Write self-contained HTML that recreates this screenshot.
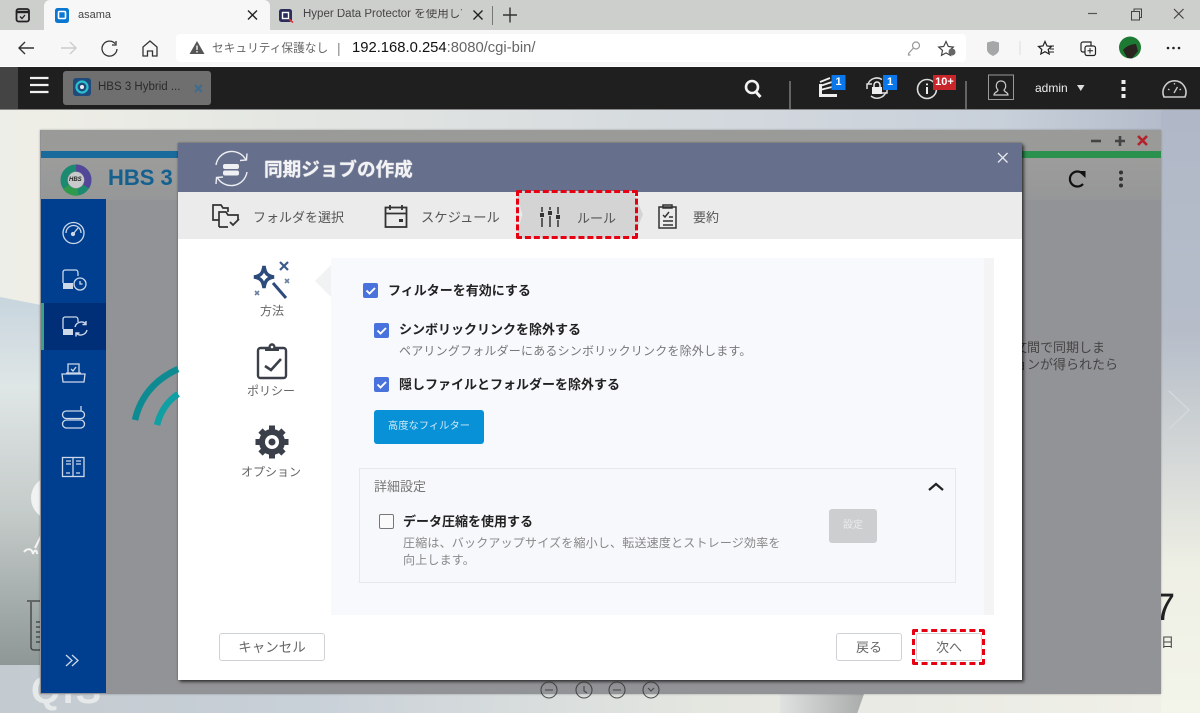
<!DOCTYPE html>
<html lang="ja"><head><meta charset="utf-8"><title>asama</title>
<style>
*{box-sizing:border-box;margin:0;padding:0}
html,body{width:1200px;height:713px;overflow:hidden;background:#eee}
body{position:relative;font-family:"Liberation Sans","Noto Sans CJK JP",sans-serif}
#w{position:absolute;left:0;top:0;width:1200px;height:713px;overflow:hidden;filter:blur(.3px)}
.a{position:absolute}
.t{position:absolute;white-space:nowrap;line-height:1}
svg{position:absolute;left:0;top:0}
.btn{position:absolute;background:#fff;border:1px solid #cfd2d4;border-radius:3px;color:#666;font-size:13px;text-align:center}
.cb{position:absolute;width:15px;height:15px;border-radius:2px;background:#4a72dc}
.b{font-weight:bold;color:#222;font-size:13px}
.g{color:#777;font-size:12px;letter-spacing:.2px}
.dash{position:absolute;border:3px dashed #e60012;border-radius:2px}
</style></head><body><div id="w">
<!-- desktop -->
<div class="a" style="left:0;top:110px;width:1200px;height:603px;background:linear-gradient(90deg,#eeeee8 0,#eeeee6 40px,#c8d0da 1000px,#b0b8c8 1200px)"></div>
<div class="a" style="left:0;top:297px;width:41px;height:368px;background:linear-gradient(180deg,#c8d5de 0,#dfe6e6 90px,#c3cac8 220px,#8e9796 368px);clip-path:polygon(0 0,100% 8px,100% 100%,0 100%)"></div>
<div class="a" style="left:1161px;top:110px;width:39px;height:603px;background:linear-gradient(180deg,#b0b8c8 0,#b6bdc9 220px,#d2d6d6 340px,#eff0e5 460px,#f3f4ea 100%)"></div>
<div class="a" style="left:0;top:665px;width:1161px;height:48px;background:linear-gradient(90deg,#c4cbd0 0,#c8d0d8 300px,#e4e6e0 700px,#f0f0e8 100%)"></div>
<div class="a" style="left:780px;top:694px;width:84px;height:19px;background:linear-gradient(90deg,#dfe2e0,#a9acaa);clip-path:polygon(0 0,100% 0,92% 100%,0 100%)"></div>
<div class="t" style="left:31px;top:672px;font-size:38px;font-weight:bold;color:#e6e9ea;letter-spacing:-4px">QTS</div>
<div class="a" style="left:31px;top:476px;width:44px;height:44px;border-radius:50%;background:#f1f3f2"></div>
<div class="t" style="left:1154px;top:589px;font-size:38px;color:#222">7</div>
<div class="t" style="left:1161px;top:636px;font-size:13px;color:#444">日</div>
<svg width="1200" height="713" viewBox="0 0 1200 713" fill="none">
<path d="M27 601h14M31 602v45q0 3 3 3h7M36 622h5M36 627h5M36 632h5M36 637h5M36 642h5" stroke="#3a3d3d" stroke-width="1.300"/>
<path d="M24 552c3-4 8-4 9 2 1-4 4-5 4 0M35 548l6-12" stroke="#f4f4f4" stroke-width="2"/>
</svg>

<!-- HBS window -->
<div class="a" style="left:40px;top:130px;width:1121px;height:564px;background:#929396;box-shadow:0 0 2px rgba(0,0,0,.3)"></div>
<div class="a" style="left:41px;top:130px;width:1120px;height:21px;background:#9a9a99"></div>
<div class="a" style="left:41px;top:151px;width:1120px;height:7px;background:#2a924e"></div>
<div class="a" style="left:41px;top:151px;width:140px;height:7px;background:#1b6a9c"></div>
<div class="a" style="left:41px;top:158px;width:1120px;height:42px;background:linear-gradient(180deg,#9c9c9b,#969798)"></div>
<div class="a" style="left:41px;top:199px;width:65px;height:494px;background:#003f90"></div>
<div class="a" style="left:41px;top:303px;width:65px;height:47px;background:#002f77"></div>
<div class="a" style="left:41px;top:303px;width:3px;height:47px;background:#3f9e86"></div>
<div class="t" style="left:108px;top:167px;font-size:22px;font-weight:bold;color:#14608f">HBS 3</div>
<div class="t" style="left:1014px;top:339px;font-size:13px;line-height:17px;color:#444">文間で同期しま<br>ョンが得られたら</div>

<!-- Browser chrome -->
<div class="a" style="left:0;top:0;width:1200px;height:30px;background:#cdcfcc"></div>
<div class="a" style="left:44px;top:0;width:226px;height:31px;background:#f7f7f7;border-radius:6px 6px 0 0"></div>
<div class="a" style="left:0;top:30px;width:1200px;height:36px;background:#f7f7f7"></div>
<div class="a" style="left:176px;top:34px;width:790px;height:28px;background:#fff;border-radius:4px"></div>
<div class="t" style="left:78px;top:10px;font-size:11px;color:#444">asama</div>
<div class="t" style="left:303px;top:9px;font-size:11.500px;color:#444;width:159px;overflow:hidden">Hyper Data Protector を使用して/</div>
<div class="t" style="left:212px;top:42.500px;font-size:11.700px;color:#666">セキュリティ保護なし</div>
<div class="t" style="left:337px;top:41px;font-size:14px;color:#888">|</div>
<div class="t" style="left:352px;top:41px;font-size:14.800px;color:#666"><span style="color:#111">192.168.0.254</span>:8080/cgi-bin/</div>

<!-- QTS bar -->
<div class="a" style="left:0;top:66px;width:1200px;height:1px;background:#fff"></div>
<div class="a" style="left:0;top:67px;width:1200px;height:42px;background:#1f1f1f"></div>
<div class="a" style="left:0;top:67px;width:18px;height:42px;background:#444"></div>
<div class="a" style="left:0;top:109px;width:1200px;height:1px;background:#888"></div>
<div class="a" style="left:63px;top:71px;width:148px;height:34px;background:#6f6f6f;border-radius:3px"></div>
<div class="t" style="left:98px;top:82px;font-size:11.500px;color:#2a2a2a">HBS 3 Hybrid ...</div>
<div class="t" style="left:1035px;top:82px;font-size:12px;color:#eee">admin</div>

<!-- Modal -->
<div class="a" style="left:178px;top:143px;width:844px;height:537px;background:#fff;box-shadow:2px 2px 3px rgba(0,0,0,.6),0 0 2px rgba(0,0,0,.4)"></div>
<div class="a" style="left:178px;top:143px;width:844px;height:49px;background:#666f8b"></div>
<div class="a" style="left:178px;top:192px;width:844px;height:47px;background:#ebebeb"></div>
<div class="a" style="left:516px;top:191px;width:127px;height:47px;background:#d4d4d4;clip-path:polygon(0 0,92% 0,100% 50%,92% 100%,0 100%,5% 50%)"></div>
<div class="t" style="left:264px;top:161px;font-size:18.600px;font-weight:bold;color:#f3f3f5;text-shadow:0 0 1px #fff">同期ジョブの作成</div>
<div class="t" style="left:253px;top:211px;font-size:13px;color:#555">フォルダを選択</div>
<div class="t" style="left:421px;top:211px;font-size:13.300px;color:#555">スケジュール</div>
<div class="t" style="left:577px;top:212px;font-size:13px;color:#555">ルール</div>
<div class="t" style="left:693px;top:211px;font-size:13px;color:#555">要約</div>
<div class="t" style="left:260px;top:305px;font-size:12px;color:#666">方法</div>
<div class="t" style="left:247px;top:385px;font-size:12px;color:#666">ポリシー</div>
<div class="t" style="left:241px;top:466px;font-size:12px;color:#666">オプション</div>

<div class="a" style="left:331px;top:258px;width:663px;height:357px;background:#f8f9fd"></div>
<div class="a" style="left:984px;top:258px;width:10px;height:357px;background:#f3f4f3"></div>
<div class="a" style="left:315px;top:265px;width:16px;height:32px;background:#f1f2f3;clip-path:polygon(100% 0,0 50%,100% 100%)"></div>

<div class="cb" style="left:363px;top:283px"></div>
<div class="t b" style="left:388px;top:284px">フィルターを有効にする</div>
<div class="cb" style="left:374px;top:323px"></div>
<div class="t b" style="left:399px;top:323px">シンボリックリンクを除外する</div>
<div class="t g" style="left:399px;top:345px">ペアリングフォルダーにあるシンボリックリンクを除外します。</div>
<div class="cb" style="left:374px;top:377px"></div>
<div class="t b" style="left:399px;top:378px">隠しファイルとフォルダーを除外する</div>
<div class="a" style="left:374px;top:410px;width:110px;height:34px;background:#0891d7;border-radius:3px;color:#cfeaf8;font-size:10.300px;line-height:34px;text-align:center">高度なフィルター</div>

<div class="a" style="left:359px;top:468px;width:597px;height:115px;background:#f7f8fb;border:1px solid #e6e8ea"></div>
<div class="t" style="left:374px;top:480px;font-size:13px;color:#777">詳細設定</div>
<div class="a" style="left:379px;top:514px;width:15px;height:15px;border:1px solid #777;border-radius:2px;background:#fafafa"></div>
<div class="t b" style="left:403px;top:515px">データ圧縮を使用する</div>
<div class="t g" style="left:403px;top:535px;line-height:17px;color:#888">圧縮は、バックアップサイズを縮小し、転送速度とストレージ効率を<br>向上します。</div>
<div class="a" style="left:829px;top:509px;width:48px;height:34px;background:#ccced0;border-radius:3px;color:#ebecec;font-size:10px;line-height:34px;text-align:center">設定</div>

<div class="btn" style="left:219px;top:633px;width:106px;height:28px;line-height:27px;font-size:13.500px">キャンセル</div>
<div class="btn" style="left:836px;top:633px;width:66px;height:28px;line-height:27px">戻る</div>
<div class="btn" style="left:916px;top:633px;width:66px;height:28px;line-height:27px">次へ</div>
<div class="dash" style="left:516px;top:190px;width:122px;height:49px"></div>
<div class="dash" style="left:912px;top:629px;width:73px;height:36px"></div>

<svg width="1200" height="713" viewBox="0 0 1200 713" fill="none">
<!-- tab strip icons -->
<g stroke="#222" stroke-width="1.800"><rect x="16.500" y="9" width="12.500" height="12.500" rx="2"/><path d="M16.500 12h12.500" stroke-width="2.500"/><path d="M20 16.500l2 2 3-3.500" stroke-width="1.300"/></g>
<rect x="55" y="8" width="14" height="15" rx="2.500" fill="#0a78d2"/><rect x="58.500" y="11.500" width="7" height="7" rx="1" stroke="#fff" stroke-width="1.600"/>
<path d="M248 10.500l9 9M257 10.500l-9 9" stroke="#222" stroke-width="1.400"/>
<rect x="279" y="9" width="13" height="13" rx="2.500" fill="#2d2d5c"/><rect x="282.500" y="12.500" width="6" height="6" stroke="#fff" stroke-width="1.400"/><path d="M289 19l4 3.500" stroke="#d33" stroke-width="1.500"/>
<path d="M473.500 10.500l9 9M482.500 10.500l-9 9" stroke="#222" stroke-width="1.400"/>
<path d="M492.500 6v19" stroke="#777"/><path d="M510 7.500v15M503 15h14" stroke="#333" stroke-width="1.400"/>
<path d="M1088 13.500h9" stroke="#555" stroke-width="1.200"/>
<path d="M1131.500 11.500h8v8.500h-8zM1134 11.500V9h7.500v8.500H1139.500" stroke="#444"/>
<path d="M1174 9l9.500 9.500M1183.500 9l-9.500 9.500" stroke="#444" stroke-width="1.200"/>
<!-- nav row -->
<path d="M34 48H19M25 42l-6 6 6 6" stroke="#333" stroke-width="1.400"/>
<path d="M76 48H61M70 42l6 6-6 6" stroke="#ccc" stroke-width="1.400"/>
<path d="M115 43.500a7.500 7.500 0 1 0 2 5.500M116 41v4h-4" stroke="#333" stroke-width="1.300"/>
<path d="M150 41l-7 6v9h4.500v-5h5v5h4.500v-9z" stroke="#333" stroke-width="1.300"/>
<path d="M197 41l7.500 13h-15z" fill="#555"/><path d="M197 45.500v4.500M197 51v1.500" stroke="#fff" stroke-width="1.300"/>
<circle cx="916" cy="45.500" r="3.500" stroke="#999" stroke-width="1.200"/><path d="M913.500 48l-5 5.500v1.500h2" stroke="#999" stroke-width="1.200"/>
<path d="M946 41.500l2.300 5 5 .6-3.800 3.300 1 5-4.500-2.500-4.500 2.500 1-5-3.800-3.300 5-.6z" stroke="#444" stroke-width="1.200"/><circle cx="952" cy="52" r="3.500" fill="#666"/>
<path d="M993 41l6 1.500v7c0 3-3 5-6 6.500-3-1.500-6-3.500-6-6.500v-7z" fill="#a5a7a8"/>
<path d="M1020 41v14" stroke="#ddd"/>
<path d="M1045 41.500l2 4.500 4.500.5-3.300 3 1 4.500-4.200-2.300-4.200 2.300 1-4.500-3.300-3 4.500-.5z" stroke="#222" stroke-width="1.200"/><path d="M1050 46h4M1050 49h4M1049 52h5" stroke="#222"/>
<path d="M1083 42h8v10h-8a2 2 0 0 1-2-2v-6a2 2 0 0 1 2-2z" stroke="#222" stroke-width="1.200"/><rect x="1085" y="46" width="10.500" height="9.500" rx="2" fill="#f7f7f7" stroke="#222" stroke-width="1.200"/><path d="M1090 48v5.500M1087.500 50.700h5.500" stroke="#222"/>
<circle cx="1130" cy="47.500" r="11" fill="#1d7a32"/><path d="M1123 50c3-4 9-6 13-6l2 7-6 7.500-5-1z" fill="#2a2420"/>
<circle cx="1168" cy="48" r="1.300" fill="#222"/><circle cx="1173.500" cy="48" r="1.300" fill="#222"/><circle cx="1179" cy="48" r="1.300" fill="#222"/>
<!-- QTS bar -->
<path d="M30 78h18.500M30 85h18.500M30 92h18.500" stroke="#f2f2f2" stroke-width="2.200"/>
<rect x="73" y="78" width="18" height="18" rx="3" fill="#1f4a7c"/><circle cx="82" cy="87" r="5.500" stroke="#2bc0d0" stroke-width="2.200"/><circle cx="82" cy="87" r="2" fill="#eee"/>
<path d="M195 85l7 7M202 85l-7 7" stroke="#3f6d8e" stroke-width="2.200"/>
<circle cx="752" cy="87" r="6" stroke="#f2f2f2" stroke-width="2.600"/><path d="M756 92l4.500 5" stroke="#f2f2f2" stroke-width="3"/>
<path d="M790 81v28M966 81v28" stroke="#aaa"/>
<path d="M819 95.500h18" stroke="#eee" stroke-width="3"/><path d="M820 90l12-3M820 86l12-4M820 82l10-4" stroke="#eee" stroke-width="1.800"/><rect x="819" y="84" width="3" height="13" fill="#eee"/>
<rect x="831.500" y="75" width="14" height="15" fill="#0a78ea"/>
<path d="M868 84a9.500 9.500 0 0 1 14-4.500M886 92a9.500 9.500 0 0 1-15 4M867 89v-5h5M887 88v5h-5" stroke="#ddd" stroke-width="1.500"/><rect x="872" y="87" width="10" height="7" fill="#eee"/><path d="M874 87v-2a3 3 0 0 1 6 0v2" stroke="#eee" stroke-width="1.500"/>
<rect x="883" y="75" width="14" height="15" fill="#0a78ea"/>
<circle cx="927" cy="89" r="9.500" stroke="#ddd" stroke-width="1.600"/><path d="M927 87v7M927 83.500v1.800" stroke="#eee" stroke-width="2"/>
<rect x="933" y="75" width="23" height="15" fill="#c9262c"/>
<rect x="988.500" y="75" width="25" height="24.500" stroke="#999"/><path d="M994 95c0-3 4-3 4-5-3-3-2-9 3-9s6 6 3 9c0 2 4 2 4 5z" stroke="#ccc" stroke-width="1.200"/>
<path d="M1077 85h7.500l-3.700 6z" fill="#ddd"/>
<rect x="1121.500" y="80" width="4" height="4" fill="#eee"/><rect x="1121.500" y="87" width="4" height="4" fill="#eee"/><rect x="1121.500" y="94" width="4" height="4" fill="#eee"/>
<path d="M1164 97a11.500 11.500 0 1 1 21 0z" stroke="#ccc" stroke-width="1.600"/><path d="M1174 93l3.500-6M1168 89l1.500 1M1181 89l-1.500 1M1174.500 83v1.500" stroke="#ccc" stroke-width="1.300"/>
<!-- HBS window chrome -->
<path d="M1091 141h10" stroke="#444" stroke-width="2.600"/><path d="M1115 141h10M1120 136v10" stroke="#444" stroke-width="2.600"/><path d="M1138 136l9 9M1147 136l-9 9" stroke="#b5222a" stroke-width="2.600"/>
<path d="M1083 174a7.500 7.500 0 1 0 0 10" stroke="#111" stroke-width="2.200"/><path d="M1078 171h7.500v7z" fill="#111"/>
<circle cx="1121" cy="172.500" r="2" fill="#333"/><circle cx="1121" cy="179" r="2" fill="#333"/><circle cx="1121" cy="185.500" r="2" fill="#333"/>
<!-- HBS logo -->
<circle cx="76" cy="180" r="12" stroke="#1b8a70" stroke-width="7"/><path d="M76 168a12 12 0 0 1 10 18.500" stroke="#54479a" stroke-width="7"/><path d="M66 187a12 12 0 0 0 12 5" stroke="#2f9a4c" stroke-width="7"/><circle cx="76" cy="180" r="8" fill="#c8cacc"/>
<!-- sidebar icons -->
<g stroke="#cdd8e8" stroke-width="1.300">
<circle cx="73.500" cy="233" r="10.500"/><path d="M66 233a7.500 7.500 0 0 1 15 0M73 234l5-6"/><circle cx="73" cy="234" r="1.500" fill="#cdd8e8"/>
<path d="M63 283v-11c0-1 1-2 2-2h11c1 0 2 1 2 3v3"/><rect x="63" y="283" width="10" height="6" fill="#cdd8e8" stroke="none"/><circle cx="80" cy="284" r="6" fill="#003f90"/><path d="M80 281v3h2.500"/>
<path d="M63 329v-10c0-1 1-2 2-2h11c1 0 2 1 2 3v2"/><rect x="63" y="329" width="10" height="6" fill="#cdd8e8" stroke="none"/><path d="M75 327a6.500 6.500 0 0 1 11-3M87 330a6.500 6.500 0 0 1-11 3M86 321v3.500h-3.500M76 336.500V333h3.500" stroke-width="1.400"/>
<path d="M68 373v-9h11v9M71 369l2 2 3-4M62 374h23l-1 8h-21zM66 373h15"/>
<rect x="62.500" y="411" width="22" height="7.500" rx="3.700"/><rect x="62.500" y="420" width="22" height="8" rx="4"/><path d="M81 411v-5"/>
<rect x="62.500" y="457.500" width="21.500" height="19"/><path d="M73 457.500v19M66 461h5M66 464h5M76 461h5M76 464h5M66 473h4M76 473h4"/>
<path d="M66 655l6 5.500-6 5.500M72 655l6 5.500-6 5.500" stroke-width="1.300"/>
</g>
<!-- teal arcs -->
<path d="M135 420Q143 385 178 369" stroke="#0e8a92" stroke-width="6.500"/>
<path d="M157 425Q162 405 178 394" stroke="#10a0a4" stroke-width="6.500"/>
<path d="M1169 391l20 19-20 19" stroke="#d4d8dd" stroke-width="1.500"/>
<g stroke="#333" stroke-width="1.100" opacity=".8"><circle cx="549" cy="690" r="8"/><circle cx="584" cy="690" r="8"/><circle cx="617" cy="690" r="8"/><circle cx="651" cy="690" r="8"/><path d="M545 690h8M584 686v5l3 2M613 690h8M648 688l3 3 3-3"/></g>
<!-- modal header -->
<g stroke="#eceef3" stroke-width="1.400"><path d="M216 165A16 16 0 0 1 246 160M247 172A16 16 0 0 1 217 177"/><path d="M240 160.500l6.500-.5.500-6.500M223 177l-6.500.5-.5 6.500"/></g>
<rect x="223" y="164" width="16" height="5" rx="2" fill="#eef0f3"/><rect x="223" y="170.500" width="16" height="5" rx="2" fill="#eef0f3"/>
<path d="M998 153l9.500 9.500M1007.500 153l-9.500 9.500" stroke="#e6e8ee" stroke-width="1.300"/>
<!-- step icons -->
<g stroke="#333" stroke-width="1.700">
<path d="M219 220h-6v-15h8l2 3h5v4"/><path d="M219 227v-15h7l2 3h10v5M219 227h9"/><path d="M230 222l3 3 6-6" stroke-width="1.800"/>
<rect x="385.500" y="207.500" width="21" height="19.500" stroke-width="1.800"/><path d="M385.500 213.500h21M390 205v5M402 205v5" stroke-width="1.800"/><rect x="399" y="219" width="4" height="3" fill="#333" stroke="none"/>
<path d="M542 207v5M542 218v9M550 207v3M550 216v11M558 207v7M558 220v7" stroke-width="1.500"/>
<rect x="540" y="213" width="4" height="4" fill="#333" stroke="none"/><rect x="548" y="211" width="4" height="4" fill="#333" stroke="none"/><rect x="556" y="215" width="4" height="4" fill="#333" stroke="none"/>
<path d="M659 207h17v21h-17zM663 205h9v3h-9zM663 215l2 2 4-5M669 217h4M663 221h10M663 225h10" stroke-width="1.500"/>
</g>
<!-- left nav icons -->
<path d="M264 266c1 7 3 10 10 11-7 1-9 4-10 11-1-7-3-10-10-11 7-1 9-4 10-11z" stroke="#2d4a7c" stroke-width="3.500"/>
<path d="M273 283l13 15" stroke="#2d4a7c" stroke-width="3"/>
<path d="M280 262l8 8M288 262l-8 8" stroke="#3d5a8c" stroke-width="2.200"/><path d="M285 279l4 4M289 279l-4 4M255 291l4 4M259 291l-4 4" stroke="#6c80a4" stroke-width="1.600"/>
<rect x="258" y="348" width="28" height="30" rx="2.500" stroke="#3a3f4a" stroke-width="2.400"/><path d="M265 349c0-2 2-2 3.500-2 0-5 7-5 7 0 1.500 0 3.500 0 3.500 2v2h-14z" fill="#3a3f4a"/><circle cx="272" cy="347" r="1.300" fill="#fff"/><path d="M265 366l6 4 10-11" stroke="#3a3f4a" stroke-width="2.600"/>
<g transform="translate(272 442)"><circle r="13" fill="#3a3f4a"/><g stroke="#3a3f4a" stroke-width="6"><path d="M0-16.500v5M0 16.500v-5M-16.500 0h5M16.500 0h-5M-11.500-11.500l3.500 3.500M11.500 11.500l-3.500-3.500M-11.500 11.500l3.500-3.500M11.500-11.500l-3.500 3.500"/></g><circle r="7" fill="#fff"/><circle r="3.500" fill="#3a3f4a"/></g>
<!-- checks -->
<g stroke="#fff" stroke-width="1.900"><path d="M366.500 290.500l3 3 5.500-5.500"/><path d="M377.500 330.500l3 3 5.500-5.500"/><path d="M377.500 384.500l3 3 5.500-5.500"/></g>
<path d="M929 490l7-6 7 6" stroke="#222" stroke-width="2.200"/>
</svg>
<div class="t" style="left:933px;top:77px;font-size:11px;font-weight:bold;color:#fff;width:23px;text-align:center">10+</div>
<div class="t" style="left:831.500px;top:77px;font-size:11px;font-weight:bold;color:#fff;width:14px;text-align:center">1</div>
<div class="t" style="left:883px;top:77px;font-size:11px;font-weight:bold;color:#fff;width:14px;text-align:center">1</div>
<div class="t" style="left:69px;top:177px;font-size:6px;font-weight:bold;font-style:italic;color:#222">HBS</div>
</div></body></html>
